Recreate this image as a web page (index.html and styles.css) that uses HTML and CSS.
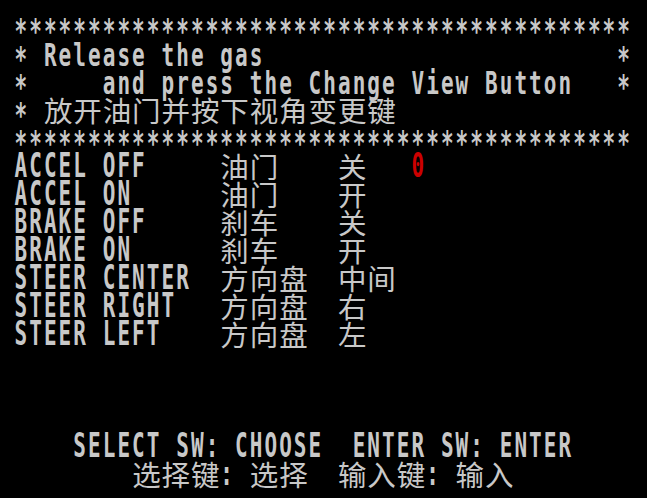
FILE: index.html
```html
<!DOCTYPE html>
<html>
<head>
<meta charset="utf-8">
<title>Test Mode</title>
<link rel="stylesheet" href="styles.css">
</head>
<body>
<div class="screen">
<div class="row"><span class="ast">******************************************</span></div>
<div class="row"><span class="ast">* </span><span class="hd">Release the gas</span><span class="ast">                        *</span></div>
<div class="row"><span class="ast">*     </span><span class="hd">and press the Change View Button</span><span class="ast">   *</span></div>
<div class="row"><span class="ast">* </span><span class="zh">放开油门并按下视角变更键</span><span class="ast">                 *</span></div>
<div class="row"><span class="ast">******************************************</span></div>
<div class="row"><span class="en">ACCEL OFF     </span><span class="zh">油门</span><span class="en">    </span><span class="zh">关</span><span class="en">   </span><span class="en val">0</span></div>
<div class="row"><span class="en">ACCEL ON      </span><span class="zh">油门</span><span class="en">    </span><span class="zh">开</span></div>
<div class="row"><span class="en">BRAKE OFF     </span><span class="zh">刹车</span><span class="en">    </span><span class="zh">关</span></div>
<div class="row"><span class="en">BRAKE ON      </span><span class="zh">刹车</span><span class="en">    </span><span class="zh">开</span></div>
<div class="row"><span class="en">STEER CENTER  </span><span class="zh">方向盘</span><span class="en">  </span><span class="zh">中间</span></div>
<div class="row"><span class="en">STEER RIGHT   </span><span class="zh">方向盘</span><span class="en">  </span><span class="zh">右</span></div>
<div class="row"><span class="en">STEER LEFT    </span><span class="zh">方向盘</span><span class="en">  </span><span class="zh">左</span></div>
<div class="row"></div>
<div class="row"></div>
<div class="row"></div>
<div class="row"><span class="en">    SELECT SW: CHOOSE  ENTER SW: ENTER</span></div>
<div class="row"><span class="en">        </span><span class="zh">选择键</span><span class="en">: </span><span class="zh">选择</span><span class="en">  </span><span class="zh">输入键</span><span class="en">: </span><span class="zh">输入</span></div>
</div>
</body>
</html>
```
FILE: styles.css
```css
/* base */
html,body{margin:0;padding:0;background:#000;}

/* screen: 42 cols x 17 rows, col 14.7px, row 28px */
.screen{width:647px;height:498px;box-sizing:border-box;padding:12px 0 0 14.5px;overflow:hidden;background:#000;color:#c8c8c8;}
.row{height:28px;white-space:pre;font-size:0;line-height:28px;}

.en,.hd,.ast{display:inline-block;vertical-align:top;height:28px;line-height:28px;
	font-family:"DejaVu Sans Mono",monospace;font-weight:bold;font-size:21px;letter-spacing:2.06px;}
.en{transform:scaleY(1.63);transform-origin:50% 14px;}
.hd{transform:scaleY(1.5);transform-origin:50% 12px;}
.ast{transform:translateY(6px) scaleY(1.6);transform-origin:50% 14px;}

.zh{display:inline-block;vertical-align:top;height:28px;line-height:28px;
	font-family:"Noto Sans CJK SC",sans-serif;font-size:28.5px;letter-spacing:0.9px;}

.val{color:#cc0000;}
```
